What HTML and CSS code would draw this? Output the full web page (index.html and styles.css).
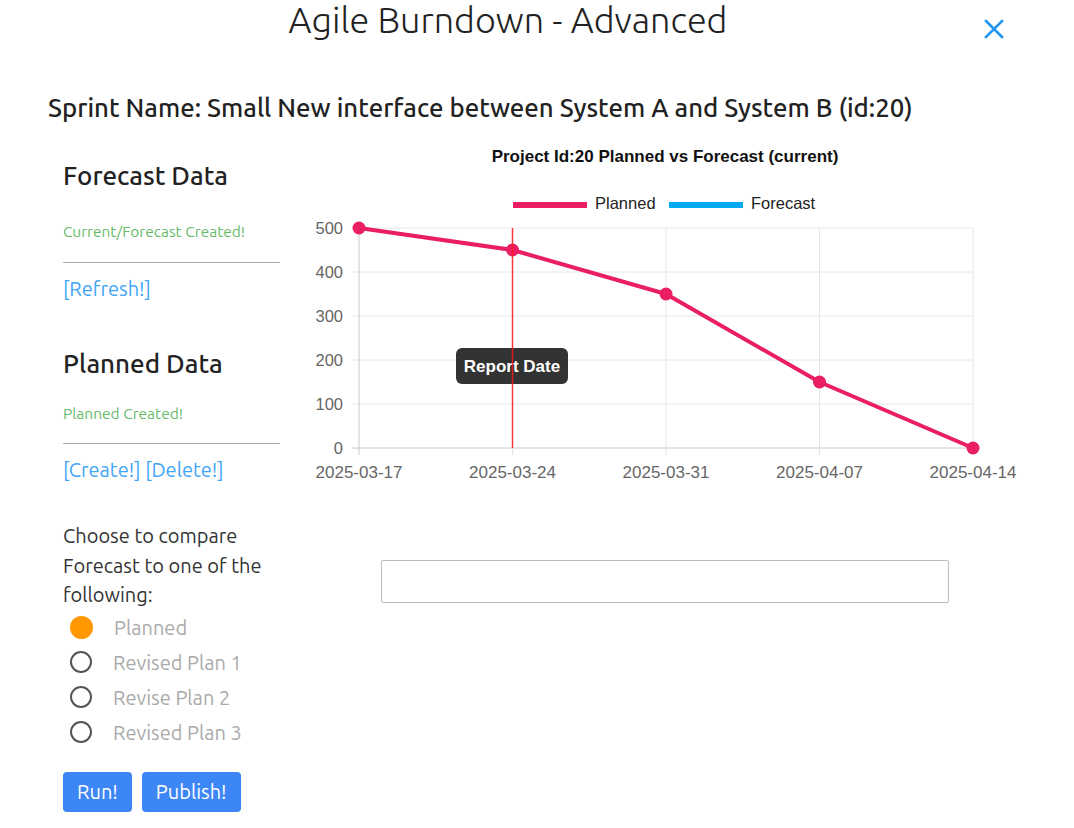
FILE: index.html
```html
<!DOCTYPE html>
<html lang="en">
<head>
  <meta charset="UTF-8" />
  <title>Agile Burndown - Advanced</title>
  <link rel="stylesheet" href="styles.css">
</head>
<body>
<div class="app">
  <header class="head">
    <h1 class="head-title">Agile Burndown - Advanced</h1>
    <button class="close" aria-label="Close">
      <svg width="20" height="20" viewBox="0 0 20 20"><path d="M2 2 L18 18 M18 2 L2 18" stroke="#2196f3" stroke-width="2.6" stroke-linecap="square"/></svg>
    </button>
  </header>

  <h2 class="sprint">Sprint Name: Small New interface between System A and System B (id:20)</h2>

  <div class="main">
    <aside class="side">
      <h3 class="side-title">Forecast Data</h3>
      <p class="ok ok-first">Current/Forecast Created!</p>
      <hr class="rule rule-first">
      <div class="links"><a href="#">[Refresh!]</a></div>

      <h3 class="side-title second">Planned Data</h3>
      <p class="ok ok-second">Planned Created!</p>
      <hr class="rule rule-second">
      <div class="links"><a href="#">[Create!]</a> <a href="#">[Delete!]</a></div>

      <p class="choose">Choose to compare Forecast to one of the following:</p>
      <label class="radio checked"><span class="dot"></span>Planned</label>
      <label class="radio"><span class="dot"></span>Revised Plan 1</label>
      <label class="radio"><span class="dot"></span>Revise Plan 2</label>
      <label class="radio"><span class="dot"></span>Revised Plan 3</label>

      <div class="actions">
        <button class="btn">Run!</button>
        <button class="btn">Publish!</button>
      </div>
    </aside>

    <section class="chart-col">
      <svg class="chart" width="730" height="360" viewBox="0 0 730 360">
        <text class="c-title" x="365" y="22">Project Id:20 Planned vs Forecast (current)</text>

        <rect x="213" y="62" width="74" height="6" fill="#e91e63"/>
        <text class="c-legend" x="295" y="69">Planned</text>
        <rect x="369" y="62" width="74" height="6" fill="#03a9f4"/>
        <text class="c-legend" x="451" y="69">Forecast</text>

        <g class="grid">
          <line x1="52" y1="88" x2="673" y2="88"/>
          <line x1="52" y1="132" x2="673" y2="132"/>
          <line x1="52" y1="176" x2="673" y2="176"/>
          <line x1="52" y1="220" x2="673" y2="220"/>
          <line x1="52" y1="264" x2="673" y2="264"/>
          <line x1="212.5" y1="88" x2="212.5" y2="315"/>
          <line x1="366" y1="88" x2="366" y2="315"/>
          <line x1="519.5" y1="88" x2="519.5" y2="315"/>
          <line x1="673" y1="88" x2="673" y2="315"/>
        </g>
        <g class="axis">
          <line x1="52" y1="308" x2="673" y2="308"/>
          <line x1="59" y1="88" x2="59" y2="315"/>
        </g>

        <g class="c-ylab">
          <text x="43" y="94">500</text>
          <text x="43" y="138">400</text>
          <text x="43" y="182">300</text>
          <text x="43" y="226">200</text>
          <text x="43" y="270">100</text>
          <text x="43" y="314">0</text>
        </g>
        <g class="c-xlab">
          <text x="59" y="338">2025-03-17</text>
          <text x="212.5" y="338">2025-03-24</text>
          <text x="366" y="338">2025-03-31</text>
          <text x="519.5" y="338">2025-04-07</text>
          <text x="673" y="338">2025-04-14</text>
        </g>

        <polyline class="c-line" points="59,88 212.5,110 366,154 519.5,242 673,308"/>
        <g fill="#e91e63">
          <circle cx="59" cy="88" r="6.5"/>
          <circle cx="212.5" cy="110" r="6.5"/>
          <circle cx="366" cy="154" r="6.5"/>
          <circle cx="519.5" cy="242" r="6.5"/>
          <circle cx="673" cy="308" r="6.5"/>
        </g>

        <rect x="156" y="208" width="112" height="36" rx="6" fill="rgba(0,0,0,0.8)"/>
        <text class="c-tip" x="212" y="232">Report Date</text>
        <line class="c-report" x1="212.5" y1="88" x2="212.5" y2="308"/>
      </svg>

      <input class="note" type="text">
    </section>
  </div>
</div>
</body>
</html>
```

FILE: styles.css
```css
* { box-sizing: border-box; }
html, body { margin: 0; padding: 0; background: #fff; }
body { font-family: Ubuntu, Roboto, sans-serif; color: #212121; width: 1074px; height: 828px; overflow: hidden; }

.head { display: flex; align-items: flex-start; padding: 0 63px 0 40px; }
.head-title { flex: 1; margin: 0; text-align: center; font-size: 36px; line-height: 40px; font-weight: 300; color: #222; }
.close { width: 35px; height: 36px; border: none; background: none; padding: 0; display: flex; align-items: center; justify-content: center; cursor: pointer; margin-top: 11px; }

.sprint { margin: 45px 0 0; padding-left: 48px; font-size: 25.8px; line-height: 32px; font-weight: 500; color: #222; }

.main { display: flex; gap: 20px; padding-left: 63px; }
.side { width: 217px; padding-top: 36px; }
.side-title { margin: 0; font-size: 26px; line-height: 32px; font-weight: 500; color: #222; }
.side-title.second { margin-top: 46px; }
.ok { margin: 0; font-size: 15.5px; line-height: 20px; color: #66bb6a; }
.ok-first { margin-top: 30px; }
.ok-second { margin-top: 24px; }
.rule { border: 0; border-top: 1px solid #aaa; margin: 0; }
.rule-first { margin-top: 20px; }
.rule-second { margin-top: 19px; }
.links { margin-top: 13px; font-size: 20px; line-height: 26px; }
.links a { color: #42a5f5; text-decoration: none; }

.choose { margin: 38px 0 0; font-size: 20px; line-height: 29.5px; color: #333; }
.radio { display: flex; align-items: center; height: 35px; font-size: 20px; color: #aaa; }
.radio .dot { width: 22px; height: 22px; border: 2px solid #555; border-radius: 50%; margin: 0 21px 0 7px; }
.radio.checked .dot { border: none; background: #ff9800; width: 23px; height: 23px; }

.actions { display: flex; gap: 10px; margin-top: 22px; }
.btn { height: 40px; padding: 0 14px; border: none; border-radius: 4px; background: #3d86f5; color: #fff; font-family: inherit; font-size: 20px; cursor: pointer; }

.chart-col { width: 730px; margin-top: 16px; display: flex; flex-direction: column; }
.chart { display: block; font-family: "Liberation Sans", Arial, sans-serif; }
.c-title { font-size: 17px; font-weight: bold; text-anchor: middle; fill: #111; }
.c-legend { font-size: 16.5px; fill: #222; }
.grid line { stroke: #e6e6e6; stroke-width: 1; }
.axis line { stroke: #c8c8c8; stroke-width: 1; }
.c-ylab text { font-size: 16.5px; fill: #666; text-anchor: end; }
.c-xlab text { font-size: 17px; fill: #666; text-anchor: middle; }
.c-line { fill: none; stroke: #e91e63; stroke-width: 4; stroke-linejoin: round; }
.c-tip { font-size: 17px; font-weight: bold; fill: #fff; text-anchor: middle; }
.c-report { stroke: #ff1a1a; stroke-width: 1.5; opacity: 0.85; }

.note { margin: 60px 0 0 81px; width: 568px; height: 43px; border: 1px solid #bdbdbd; border-radius: 2px; font-size: 16px; }
```
